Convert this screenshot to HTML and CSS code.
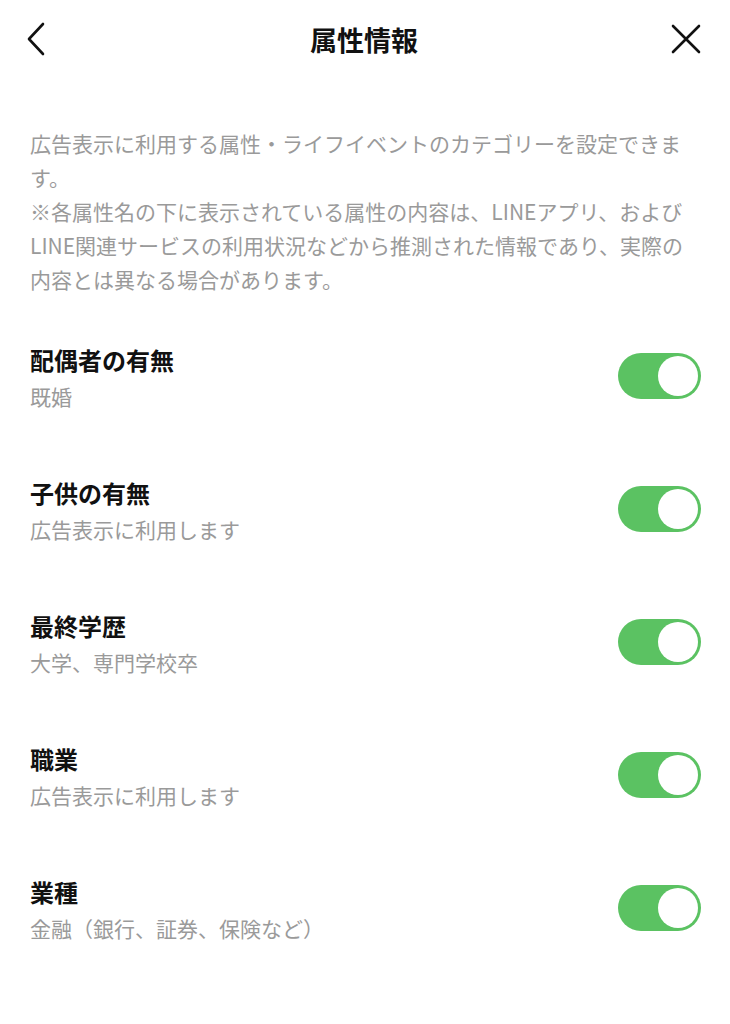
FILE: index.html
```html
<!DOCTYPE html>
<html lang="ja">
<head>
<meta charset="utf-8">
<link rel="stylesheet" href="styles.css">
</head>
<body>
<div class="page">
  <header class="header">
    <span class="icon back">
      <svg width="24" height="36" viewBox="0 0 24 36"><polyline points="19,3 5,18 19,33" fill="none" stroke="#111" stroke-width="2.6" stroke-linecap="round" stroke-linejoin="round"/></svg>
    </span>
    <h1 class="title">属性情報</h1>
    <span class="icon close">
      <svg width="32" height="32" viewBox="0 0 32 32"><path d="M3 3 L29 29 M29 3 L3 29" fill="none" stroke="#111" stroke-width="2.6" stroke-linecap="round"/></svg>
    </span>
  </header>
  <p class="desc">広告表示に利用する属性・ライフイベントのカテゴリーを設定できます。<br>※各属性名の下に表示されている属性の内容は、LINEアプリ、およびLINE関連サービスの利用状況などから推測された情報であり、実際の内容とは異なる場合があります。</p>
  <ul class="list">
    <li class="row"><div class="text"><div class="name">配偶者の有無</div><div class="value">既婚</div></div><span class="toggle"><span class="knob"></span></span></li>
    <li class="row"><div class="text"><div class="name">子供の有無</div><div class="value">広告表示に利用します</div></div><span class="toggle"><span class="knob"></span></span></li>
    <li class="row"><div class="text"><div class="name">最終学歴</div><div class="value">大学、専門学校卒</div></div><span class="toggle"><span class="knob"></span></span></li>
    <li class="row"><div class="text"><div class="name">職業</div><div class="value">広告表示に利用します</div></div><span class="toggle"><span class="knob"></span></span></li>
    <li class="row"><div class="text"><div class="name">業種</div><div class="value">金融（銀行、証券、保険など）</div></div><span class="toggle"><span class="knob"></span></span></li>
  </ul>
</div>
</body>
</html>
```
FILE: styles.css
```css
* { box-sizing: border-box; }
html, body { margin: 0; padding: 0; background: #fff; }
body {
  font-family: "Noto Sans CJK JP", "Noto Sans", sans-serif;
  color: #111;
}
.page { width: 730px; }
.header {
  height: 78px;
  display: flex;
  align-items: center;
  justify-content: space-between;
  padding: 0 28px 0 24px;
}
.icon { display: flex; align-items: center; }
.title {
  margin: 0;
  font-size: 27px;
  font-weight: 700;
  line-height: 1;
  flex: 1;
  text-align: center;
  padding-left: 10px;
}
.desc {
  margin: 48px 0 0;
  padding: 0 30px;
  font-size: 21px;
  line-height: 34px;
  color: #9a9a9a;
}
.list { list-style: none; margin: 15px 0 0; padding: 0; }
.row {
  height: 133px;
  display: flex;
  align-items: center;
  justify-content: space-between;
  padding: 0 29px 0 30px;
}
.name { font-size: 24px; font-weight: 700; line-height: 32px; }
.value { font-size: 21px; line-height: 30px; color: #9a9a9a; margin-top: 5px; }
.toggle {
  width: 83px;
  height: 46px;
  border-radius: 23px;
  background: #5bc262;
  display: flex;
  align-items: center;
  justify-content: flex-end;
  padding: 3px;
  margin-top: -4px;
}
.knob {
  width: 40px;
  height: 40px;
  border-radius: 50%;
  background: #fff;
}
```
